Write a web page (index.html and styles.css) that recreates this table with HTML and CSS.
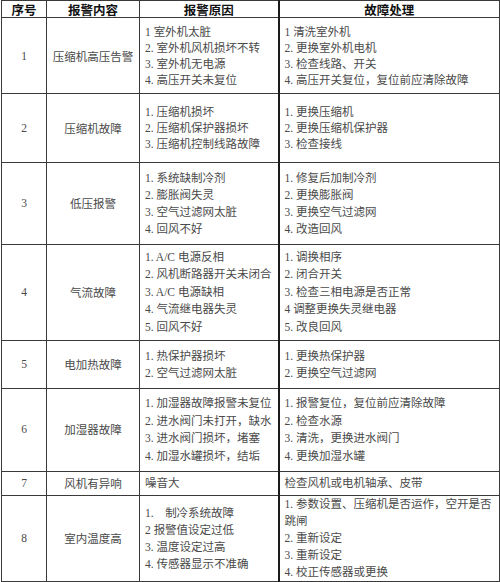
FILE: index.html
```html
<!DOCTYPE html>
<html lang="zh-CN">
<head>
<meta charset="utf-8">
<title>报警故障处理表</title>
<link rel="stylesheet" href="styles.css">
</head>
<body>
<table class="grid">
  <colgroup>
    <col class="c-no">
    <col class="c-name">
    <col class="c-cause">
    <col class="c-fix">
  </colgroup>
  <thead>
    <tr class="head">
      <th>序号</th>
      <th>报警内容</th>
      <th>报警原因</th>
      <th class="fixcol">故障处理</th>
    </tr>
  </thead>
  <tbody>
    <tr class="r1 tight">
      <td class="num">1</td>
      <td class="name">压缩机高压告警</td>
      <td class="list"><div>1 室外机太脏</div><div>2. 室外机风机损坏不转</div><div>3. 室外机无电源</div><div>4. 高压开关未复位</div></td>
      <td class="list fixcol"><div>1 清洗室外机</div><div>2. 更换室外机电机</div><div>3. 检查线路、开关</div><div>4. 高压开关复位，复位前应清除故障</div></td>
    </tr>
    <tr class="r2 tight">
      <td class="num">2</td>
      <td class="name">压缩机故障</td>
      <td class="list"><div>1. 压缩机损坏</div><div>2. 压缩机保护器损坏</div><div>3. 压缩机控制线路故障</div></td>
      <td class="list fixcol"><div>1. 更换压缩机</div><div>2. 更换压缩机保护器</div><div>3. 检查接线</div></td>
    </tr>
    <tr class="r3">
      <td class="num">3</td>
      <td class="name">低压报警</td>
      <td class="list"><div>1. 系统缺制冷剂</div><div>2. 膨胀阀失灵</div><div>3. 空气过滤网太脏</div><div>4. 回风不好</div></td>
      <td class="list fixcol"><div>1. 修复后加制冷剂</div><div>2. 更换膨胀阀</div><div>3. 更换空气过滤网</div><div>4. 改造回风</div></td>
    </tr>
    <tr class="r4 loose">
      <td class="num">4</td>
      <td class="name">气流故障</td>
      <td class="list"><div>1. A/C 电源反相</div><div>2. 风机断路器开关未闭合</div><div>3. A/C 电源缺相</div><div>4. 气流继电器失灵</div><div>5. 回风不好</div></td>
      <td class="list fixcol"><div>1. 调换相序</div><div>2. 闭合开关</div><div>3. 检查三相电源是否正常</div><div>4 调整更换失灵继电器</div><div>5. 改良回风</div></td>
    </tr>
    <tr class="r5">
      <td class="num">5</td>
      <td class="name">电加热故障</td>
      <td class="list"><div>1. 热保护器损坏</div><div>2. 空气过滤网太脏</div></td>
      <td class="list fixcol"><div>1. 更换热保护器</div><div>2. 更换空气过滤网</div></td>
    </tr>
    <tr class="r6 loose">
      <td class="num">6</td>
      <td class="name">加湿器故障</td>
      <td class="list"><div>1. 加湿器故障报警未复位</div><div>2. 进水阀门未打开，缺水</div><div>3. 进水阀门损坏，堵塞</div><div>4. 加湿水罐损坏，结垢</div></td>
      <td class="list fixcol"><div>1. 报警复位，复位前应清除故障</div><div>2. 检查水源</div><div>3. 清洗，更换进水阀门</div><div>4. 更换加湿水罐</div></td>
    </tr>
    <tr class="r7">
      <td class="num">7</td>
      <td class="name">风机有异响</td>
      <td class="list">噪音大</td>
      <td class="list fixcol">检查风机或电机轴承、皮带</td>
    </tr>
    <tr class="r8">
      <td class="num">8</td>
      <td class="name">室内温度高</td>
      <td class="list"><div>1.&nbsp;&nbsp;&nbsp; 制冷系统故障</div><div>2 报警值设定过低</div><div>3. 温度设定过高</div><div>4. 传感器显示不准确</div></td>
      <td class="list fixcol"><div>1. 参数设置、压缩机是否运作，空开是否跳闸</div><div>2. 重新设定</div><div>3. 重新设定</div><div>4. 校正传感器或更换</div></td>
    </tr>
  </tbody>
</table>
</body>
</html>
```
FILE: styles.css
```css
html, body {
  margin: 0;
  padding: 0;
  background: #ffffff;
}

body {
  padding: 0 1px;
  font-family: "Liberation Serif", "Noto Sans CJK SC", serif;
  color: #4a4a4a;
}

.grid {
  border-collapse: collapse;
  table-layout: fixed;
  width: 498px;
  font-size: 11.5px;
  line-height: 17px;
}

.c-no { width: 45px; }
.c-name { width: 93px; }
.c-cause { width: 139px; }
.c-fix { width: 221px; }

.grid th,
.grid td {
  border: 1.5px solid #3a3a3a;
  padding: 0;
  vertical-align: middle;
}

.grid .fixcol {
  border-left: 2px solid #1a1a1a;
}

.head {
  height: 17px;
}

.head th {
  font-family: "Noto Sans CJK SC", sans-serif;
  font-weight: 700;
  font-size: 12.5px;
  line-height: 15px;
  color: #111111;
  text-align: center;
}

.num,
.name {
  text-align: center;
}

.name {
  font-family: "Noto Sans CJK SC", sans-serif;
}

.list {
  text-align: left;
  padding: 0 4px 0 5px;
}

.grid td.list {
  padding: 0 4px 0 5px;
}

.tight { line-height: 16px; }
.loose { line-height: 17.5px; }

.r1 { height: 76px; }
.r2 { height: 69px; }
.r3 { height: 82px; }
.r4 { height: 96px; }
.r5 { height: 48px; }
.r6 { height: 83px; }
.r7 { height: 24px; }
.r8 { height: 84px; }
```
